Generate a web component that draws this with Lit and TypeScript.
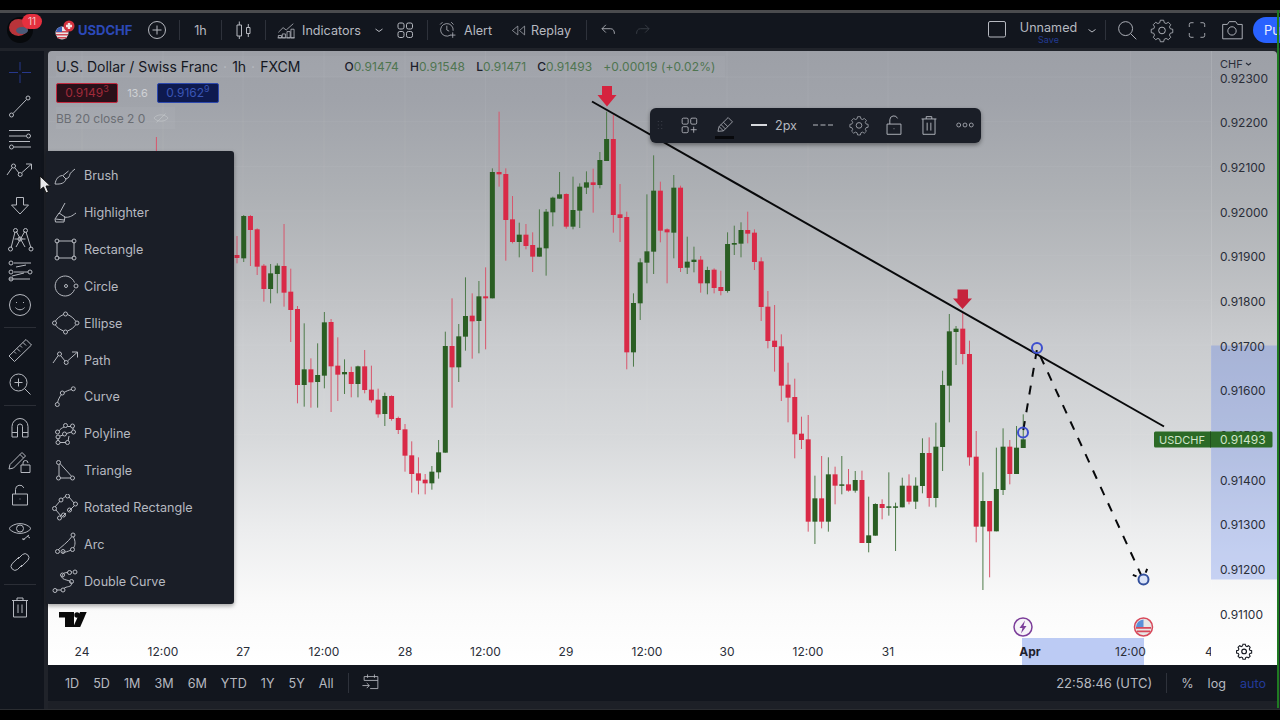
import { LitElement, html, svg, css } from 'lit';
import { customElement } from 'lit/decorators.js';

// candles, read off as [green?, high, bodyTop, bodyBottom, low]
type Raw = [number, number, number, number, number];
const G = 1, R = 0;
const setA: Raw[] = [
  [R,408,465,474,490],[G,345,348,475,486],[R,345,348,390,498],[R,385,388,500,525],[R,492,497,567,605],
  [G,492,520,567,610],[G,490,497,522,580],[R,372,498,578,620],[R,506,575,630,726],[R,618,627,855,910],
  [G,670,808,855,920],[R,775,808,847,923],[G,730,825,846,923],[G,636,667,827,865],[R,657,666,799,936],
  [R,712,797,824,903],[G,778,816,823,882],[R,800,816,852,892],[G,797,799,852,892],[R,750,799,870,880],
  [R,797,869,901,908],[R,866,899,943,953],[G,878,888,942,978],[R,886,888,957,962],[R,950,954,990,1002],
  [R,972,988,1067,1115],[R,1024,1066,1122,1178],[R,1072,1120,1142,1183],[R,1122,1139,1150,1183],[G,1098,1115,1150,1169],
  [G,1020,1057,1117,1136],[G,695,738,1058,1058],[R,595,738,802,923],[G,672,709,802,846],[G,532,648,710,752],
  [R,580,647,664,776],[G,543,589,663,760],[R,502,589,595,748],[G,205,216,595,595],[R,35,216,223,260],
  [R,205,222,360,482],[R,288,358,426,430],[G,368,404,426,472],[R,372,404,438,448],[R,397,435,470,516],
  [G,328,443,470,470],[G,327,335,445,527],[G,290,293,337,379],[G,216,283,296,296],[R,280,282,380,386],
  [G,230,330,380,388],[G,250,260,332,384],[G,214,247,263,282],[R,206,247,255,338],[G,156,180,255,265],
  [G,35,117,183,183],[R,45,117,345,398],[R,252,343,354,426],[R,335,351,757,808],[G,580,609,757,800],
];
const setB: Raw[] = [
  [G,355,367,490,540],[G,163,334,368,430],[G,46,152,335,402],[R,125,152,272,307],[R,265,268,277,430],
  [G,105,143,278,355],[R,137,143,384,396],[G,290,365,383,402],[G,320,359,366,397],[R,348,359,430,458],
  [G,380,390,430,463],[R,385,389,444,460],[R,392,441,453,466],[G,277,312,453,458],[G,257,309,314,345],
  [G,247,270,311,352],[R,215,270,281,310],[R,268,278,366,390],[R,352,364,501,543],
];
const setC: Raw[] = [
  [R,-27,20,123,145],[R,15,122,141,215],[R,103,139,257,303],[R,188,254,293,367],[R,236,291,403,475],
  [R,350,401,420,447],[R,345,418,665,695],[G,527,595,665,732],[R,468,595,665,685],[G,472,523,665,695],
  [R,500,523,557,613],[G,468,553,557,583],[R,507,553,572,575],[G,513,540,572,578],[R,512,540,729,729],
  [G,590,706,729,757],[G,610,612,707,707],[R,598,612,624,658],[G,517,619,623,647],[G,608,619,622,753],
  [G,533,557,622,622],[R,523,557,605,613],[G,532,557,605,627],[G,415,459,558,580],[R,412,459,594,620],
  [G,368,440,594,622],[G,212,255,441,513],[G,42,94,257,367],[G,78,86,96,195],[R,35,86,162,193],
  [R,122,162,472,497],[R,393,470,680,727],[G,517,603,680,870],[R,603,603,694,832],[G,443,567,694,694],
  [G,385,440,570,585],[R,420,440,522,553],[G,378,443,522,522],[G,343,418,444,444],
];
const toAbs = (set: Raw[], base: number) =>
  set.map(([g, h, t, b, l]) => ({ g, h: base + h / 3, t: base + t / 3, b: base + b / 3, l: base + l / 3 }));
const candles = [...toAbs(setA, 100), ...toAbs(setB, 140), ...toAbs(setC, 300)];

const prices: [string, number][] = [
  ['0.92300', 78], ['0.92200', 122.6], ['0.92100', 167.3], ['0.92000', 212], ['0.91900', 256.7],
  ['0.91800', 301.4], ['0.91700', 346], ['0.91600', 390.8], ['0.91500', 435.5], ['0.91400', 480.2],
  ['0.91300', 524.9], ['0.91200', 569.6], ['0.91100', 614.3],
];
const times: [string, number][] = [
  ['24', 82], ['12:00', 163], ['27', 243], ['12:00', 324], ['28', 405], ['12:00', 485.5],
  ['29', 566], ['12:00', 647], ['30', 727], ['12:00', 808], ['31', 888], ['12:00', 1130.5],
];

const dot = (x: number, y: number, r = 2) => svg`<circle cx=${x} cy=${y} r=${r}></circle>`;
const ic = (body: unknown, size = 28) =>
  html`<svg class="ic" width=${size} height=${size} viewBox="0 0 28 28">${body}</svg>`;

const pathIcon = svg`<path d="M1 17 L6.200 9.600M9 10 L13 15M15.700 14.800 L25 6.500M20 6 H25.500 V11.500"></path>${dot(7.5, 8, 2)}${dot(14.2, 16.5, 2)}`;
const gearPath = svg`<path d="M12 3.500h4l.7 3 2.200 1 2.700-1.500 2.800 2.800-1.500 2.700 1 2.200 3 .7v4l-3 .7-1 2.200 1.500 2.700-2.800 2.800-2.700-1.500-2.200 1-.7 3h-4l-.7-3-2.200-1-2.700 1.500-2.800-2.800 1.500-2.700-1-2.200-3-.7v-4l3-.7 1-2.200-1.500-2.700 2.800-2.800 2.700 1.500 2.200-1z" transform="translate(1.400 .3) scale(.9)"></path><circle cx="14" cy="14.500" r="3.600"></circle>`;
const trashPath = svg`<path d="M6 7.500h16M11 7.500V5h6v2.500M7.500 7.500V24h13V7.500M12 11.500v8.500M16 11.500v8.500"></path>`;
const lockPath = svg`<path d="M6.500 13h15v11h-15zM9.500 13V8.500a4.300 4.300 0 0 1 8.300-1.600"></path><path d="M13.600 18h.8"></path>`;

const menuItems: [string, unknown][] = [
  ['Brush', svg`<path d="M3 22c1-5 3-8 7.500-8.500l3.500 3.500c-1 4-5 5.500-11 5zM11 13.500 16.500 9M14 17c3-1 3.500-3 4-5 .3-1 2-2.500 5-5"></path>`],
  ['Highlighter', svg`<path d="M13 4 7 15M3 20l4-6 6 4-1 5H3.500zM3.500 20 12 21M12 18c5 1 8-1 12-4"></path>`],
  ['Rectangle', svg`<path d="M6 5h15M5 6v15M22 6v15M6 22h15"></path>${dot(5, 5)}${dot(22, 5)}${dot(5, 22)}${dot(22, 22)}`],
  ['Circle', svg`<path d="M22.500 10.500A10 10 0 1 0 22.500 17.500"></path>${dot(24, 14)}${dot(14, 14, 1.5)}`],
  ['Ellipse', svg`<path d="M3.500 12C5 9.500 8 7 11.500 5.500M15.500 5.500C19 7 22 9.500 23.500 12M23.500 16c-1.500 2.500-4.500 4.500-8 6M11.500 22c-3.500-1.500-6.500-3.500-8-6"></path>${dot(2.5, 14)}${dot(13.5, 5)}${dot(25, 14)}${dot(13.5, 23)}`],
  ['Path', pathIcon],
  ['Curve', svg`<path d="M5.500 19.500C6.500 16 7.500 14 9.500 11.500M12 9.500C14.500 8 17 7 19.500 6.500"></path>${dot(5.3, 21.5)}${dot(10.3, 10)}${dot(21.3, 5.8)}`],
  ['Polyline', svg`<path d="M7 11c1-2 3-3 5-4M15.500 6.500h3.500M21 8v2M19.500 12l-5 1.500M11 15l-3 1M6 18v3M8 22.500h6M16 21l1-5"></path>${dot(5.5, 12)}${dot(13.5, 5.5)}${dot(20.5, 6)}${dot(21.5, 12)}${dot(12.5, 14)}${dot(6, 17)}${dot(6, 22.5)}${dot(15.5, 22.5)}`],
  ['Triangle', svg`<path d="M7 7.500v11.500M8.500 21h10M19.300 19 8 6.500"></path>${dot(6.5, 5.5)}${dot(6.5, 21)}${dot(20.5, 21)}`],
  ['Rotated Rectangle', svg`<path d="M3 13l5-6M10 5l4-3M17 3l5 6M22 12l-5 5M14 19l-3 3M9 22 4 16"></path>${dot(2.5, 14.5)}${dot(9, 6)}${dot(15.5, 2)}${dot(23.5, 10)}${dot(17.5, 16)}${dot(11.5, 21)}${dot(7.5, 24)}`],
  ['Arc', svg`<path d="M6 20C9 17 16 12 19.500 7M21.500 7c2 4 2 8 0 11M19 20c-3 1.500-6 2.500-9 2M7 22"></path>${dot(21, 5)}${dot(5.5, 21.5)}${dot(20.5, 19.5)}${dot(11, 21.5)}`],
  ['Double Curve', svg`<path d="M4 23h5M12 21.500c2-2.500 8-1 7.500-5C19 12 9 14 10 9c.5-3 3-3.500 6-3.500M19 5h1"></path>${dot(3, 23.5)}${dot(11, 23)}${dot(19.5, 14.5)}${dot(10.5, 8)}${dot(17.5, 5.5)}${dot(23, 5)}`],
];

const railGroups: unknown[][] = [
  [
    svg`<path class="blue" d="M3 14.500h9M16 14.500h9M14 4v8.500M14 16.500V25"></path>`,
    svg`<path d="M7 22.500 20.500 8.500"></path>${dot(5.5, 24)}${dot(22, 7)}`,
    svg`<path d="M3 6.500h21M3 12h17M3 17.500h21M8 23h17"></path>${dot(22.5, 12)}${dot(5.5, 23)}`,
    pathIcon,
    svg`<path d="M10.500 6.500h7v7.500h5L14 23 5.500 14h5z"></path>`,
    svg`<path d="M5 23 9 7M10 6 19 22M19 6l-9 16M20 7l5 16M8.500 14h11"></path>${dot(9.5, 5.5)}${dot(19.5, 5.5)}${dot(14, 14)}${dot(4.5, 24)}${dot(25, 24)}`,
    svg`<path d="M8 5h17M8 14h14M3 21h21M10 9l10-2M6 18l12-3"></path>${dot(5, 5)}${dot(5, 14)}${dot(24, 14)}${dot(5, 21)}`,
    svg`<circle cx="14" cy="14" r="10.500"></circle><path d="M9.500 16.500c2 3 7 3 9 0"></path><path d="M10.500 11v1M17.500 11v1"></path>`,
  ],
  [
    svg`<path d="M3 20 20 3.500l5.500 5.500L8.500 25.500zM8 15.500l2 2M11 12.500l3 3M14 9.500l2 2M17 6.500l3 3"></path>`,
    svg`<circle cx="12.500" cy="12.500" r="8.500"></circle><path d="M12.500 8.500v8M8.500 12.500h8M18.500 18.500l6 6"></path>`,
  ],
  [
    svg`<path d="M6 23V12.500a8 8 0 0 1 16 0V23h-5.500V12.500a2.500 2.500 0 0 0-5 0V23zM6 18.500h5.500M16.500 18.500H22"></path>`,
    svg`<path d="M3 21l1-4.500L16 4.500l3.500 3.500L7.500 20zM14 6.500l3.500 3.500M15 17h9v7.500h-9zM17 17v-2a2.500 2.500 0 0 1 5 0"></path>`,
    lockPath,
    svg`<path d="M3 13.500C8 7 20 7 25 13.500 20 20 8 20 3 13.500z"></path><circle cx="14" cy="13.500" r="3.500"></circle><path d="M17 25l6-5M16 24h3M21 21l3 2"></path>`,
    svg`<path d="M12 11 16.500 6.500a4 4 0 0 1 5.600 5.600L15 19M16 17 11.500 21.500a4 4 0 0 1-5.600-5.600L13 9"></path>`,
  ],
  [trashPath],
];

@customElement('app-root')
export class AppRoot extends LitElement {
  static styles = css`
    :host {
      display: block;
      width: 1280px;
      height: 720px;
      position: relative;
      overflow: hidden;
      background: #000;
      font-family: Inter, "Liberation Sans", sans-serif;
      color: #b6b9c0;
      font-size: 12.600px;
    }
    .ic { fill: none; stroke: currentColor; stroke-width: 1; display: block; flex: none; }
    .blue { stroke: #27388c; }
    .frame { display: flex; flex-direction: column; height: 720px; }
    .lid { height: 10px; flex: none; }
    .rule { height: 2.500px; flex: none; background: #4a4b4e; }
    .topbar {
      height: 35px;
      flex: none;
      background: #12161e;
      display: grid;
      grid-template-columns: 44px 100px 26px 9px 1px 41px 1px 43px 1px 101px 23px 30px 7px 1px 77px 75px 6px 1px 42px 28px 1fr 34px 69px 18px 4px 1px 42px 28px 42px 28px 7px 27px;
      align-items: center;
      justify-items: center;
      overflow: hidden;
    }
    .sep { width: 1px; height: 20px; background: #2e323b; }
    .cell { position: relative; display: flex; align-items: center; justify-content: center; }
    .avatar { width: 26px; height: 26px; border-radius: 50%; background: #07090c; position: relative; margin-left: -4px; }
    .blob { position: absolute; left: 2px; top: 2px; width: 19px; height: 17px; border-radius: 50%; background: #b8343a; }
    .blob2 { position: absolute; left: 9px; top: 10px; width: 12px; height: 7px; border-radius: 50%; background: #4b5a78; }
    .count {
      position: absolute;
      left: 15px;
      top: -3px;
      width: 20px;
      height: 15px;
      border-radius: 8px;
      background: #e5303f;
      color: #f3c5c8;
      font-size: 10px;
      line-height: 15px;
      text-align: center;
    }
    .symbol { justify-self: start; display: flex; align-items: center; gap: 0; }
    .symbol svg { margin-left: 9px; }
    .sym { color: #2c49b8; font-weight: 700; font-size: 13px; margin-left: 1px; }
    .tool { justify-self: start; display: flex; align-items: center; white-space: nowrap; }
    .tool.ind { margin-left: 10px; gap: 4px; }
    .tool.alert { margin-left: 9px; gap: 5px; }
    .tool.replay { margin-left: 4px; gap: 3px; }
    .dim { color: #3c4049; }
    .name { display: flex; flex-direction: column; align-items: center; line-height: 13px; margin-top: 5px; }
    .save { color: #223a92; font-size: 9px; line-height: 11px; }
    .publish {
      justify-self: start;
      width: 60px;
      height: 26px;
      border-radius: 13px;
      background: #2962ff;
      color: #e8edff;
      font-size: 13px;
      line-height: 26px;
      padding-left: 11px;
      box-sizing: border-box;
    }
    .gapbar { height: 3.500px; flex: none; background: #20232a; }
    .main { flex: 1; display: flex; min-height: 0; background: #20232a; }
    .rail {
      width: 44px;
      flex: none;
      background: #11151d;
      padding: 4px 4px 0 0;
      box-sizing: border-box;
      margin-right: 4px;
    }
    .rail-group { display: flex; flex-direction: column; }
    .rail-item { height: 33.400px; display: flex; align-items: center; justify-content: center; }
    .rail-sep { height: 11.400px; display: flex; align-items: center; justify-content: center; }
    .rail-sep i { display: block; width: 32px; height: 1px; background: #2b2e36; }
    .work { flex: 1; display: flex; flex-direction: column; min-width: 0; margin-right: 3px; }
    .chart {
      height: 613.500px;
      flex: none;
      position: relative;
      border-radius: 4px 4px 0 0;
      overflow: hidden;
      background: linear-gradient(180deg, #9da0a7 0%, #a0a3aa 8%, #aeb1b5 24%, #c0c2c5 40%, #c9cbce 47%, #d7d9db 63%, #ecedee 78%, #fafafa 90%, #fff 100%);
    }
    .canvas { position: absolute; inset: 0; display: block; }
    .ax { font: 12px Inter, "Liberation Sans", sans-serif; fill: #2a2e39; }
    .ax.bold { font-weight: 700; fill: #1e222d; }
    .ax.onlabel { fill: #cfe4c8; }
    .ax.small { font-size: 11px; }
    .ax.unit { font-size: 11px; }
    .wick-g { stroke: #4e7a49; }
    .wick-r { stroke: #d8566c; }
    .legend { position: absolute; left: 8px; top: 5px; display: flex; flex-direction: column; gap: 0; }
    .title-row {
      display: flex;
      align-items: center;
      height: 21px;
      width: 669px;
      background: rgba(255, 255, 255, .04);
      color: #14171f;
      font-size: 14px;
      white-space: nowrap;
    }
    .title-row .mid { color: #b8bbc0; margin: 0 5px; }
    .ohlc { margin-left: 44px; font-size: 12px; color: #4f7550; letter-spacing: .1px; }
    .ohlc b { color: #1c202b; font-weight: 500; }
    .ohlc span { margin-right: 11px; }
    .ohlc span:last-child { margin-right: 0; }
    .badges { display: flex; align-items: center; margin-top: 6px; height: 20px; }
    .pb {
      width: 62px;
      height: 20px;
      box-sizing: border-box;
      border-radius: 2px;
      border: 1px solid;
      font-size: 12px;
      line-height: 18px;
      text-align: center;
    }
    .pb sup { font-size: 9px; line-height: 0; }
    .pb.sell { background: #2a1019; border-color: #c22a40; color: #a02a3a; }
    .pb.buy { background: #0e1a4f; border-color: #2c48ae; color: #3a55b6; }
    .spread { width: 39px; text-align: center; font-size: 11px; color: #cfd1d5; }
    .bb {
      display: flex;
      align-items: center;
      height: 22px;
      width: 119px;
      margin-top: 4px;
      background: rgba(255, 255, 255, .04);
      color: #6a6d73;
      font-size: 12px;
      gap: 7px;
      white-space: nowrap;
    }
    .bb .ic { color: #c4c6ca; }
    .bottom {
      height: 36px;
      flex: none;
      background: #12161e;
      display: flex;
      align-items: center;
      padding: 1px 11px 0 17px;
      box-sizing: border-box;
      gap: 14px;
    }
    .bottom .sep { margin-left: 0; }
    .bottom .cal { margin-left: -4px; }
    .spacer { flex: 1; }
    .utc { font-size: 13px; }
    .auto { color: #223a9a; }
    .strip { height: 8px; flex: none; background: #1d2027; border-radius: 4px 4px 0 0; }
    .floor { height: 11.500px; flex: none; background: #000; border-top: 1px solid #2a2c30; box-sizing: border-box; margin: 0 -3px 0 -48px; }
    .edge { position: absolute; right: 1px; top: 10px; width: 2px; height: 698px; background: #1f7a22; }
    .flyout {
      position: absolute;
      left: 46px;
      top: 151px;
      width: 188px;
      height: 453px;
      background: #1a1e27;
      border-radius: 0 3px 3px 3px;
      box-shadow: 0 2px 4px rgba(0, 0, 0, .35);
      box-sizing: border-box;
      padding: 6.500px 0;
    }
    .fly-item { height: 36.850px; display: flex; align-items: center; padding-left: 6px; gap: 4px; color: #b6b9c0; }
    .floating {
      position: absolute;
      left: 650px;
      top: 108px;
      width: 331px;
      height: 35px;
      box-sizing: border-box;
      padding-bottom: 1px;
      background: #1a1e27;
      border-radius: 6px;
      box-shadow: 0 2px 4px rgba(0, 0, 0, .4);
      display: grid;
      grid-template-columns: 20px 38px 34px 34px 20px 10px 34px 38px 32px 38px 1fr;
      align-items: center;
      justify-items: center;
    }
    .pencil { position: relative; display: flex; }
    .pencil::after { content: ""; position: absolute; left: 1px; right: 2px; bottom: -3px; height: 3px; background: #08090c; }
    .width-text { white-space: nowrap; }
    .cursor { position: absolute; left: 38px; top: 175px; }
  `;

  private chartSvg() {
    const x = (i: number) => 237 + i * 6.72;
    const gridX = times.map((t) => t[1]);
    return svg`
      <svg class="canvas" width="1229" height="613.500" viewBox="48 51 1229 613.500">
        <defs><clipPath id="tick-clip"><rect x="1200" y="640" width="11" height="20"></rect></clipPath></defs>
        ${gridX.map((g) => svg`<line x1=${g} x2=${g} y1="51" y2="638" stroke="#fff" stroke-opacity=".05"></line>`)}
        ${prices.map((p) => svg`<line x1="48" x2="1211" y1=${p[1] - 1} y2=${p[1] - 1} stroke="#fff" stroke-opacity=".05"></line>`)}
        <line x1="1211.500" x2="1211.500" y1="51" y2="664" stroke="#fff" stroke-opacity=".12"></line>
        <rect x="1211" y="345.500" width="66" height="234" fill="#4a74ee" fill-opacity=".27"></rect>
        <rect x="1022" y="638" width="122" height="27" fill="#bccbf4"></rect>

        <line x1="156.400" x2="156.400" y1="137" y2="160" class="wick-r"></line>
        ${candles.map((c, i) => svg`
          <line x1=${x(i)} x2=${x(i)} y1=${c.h} y2=${c.l} class=${c.g ? 'wick-g' : 'wick-r'}></line>
          <rect x=${x(i) - 2.5} y=${c.t} width="5" height=${Math.max(c.b - c.t, 1.5)} fill=${c.g ? '#2a5e23' : '#d92a47'}></rect>
        `)}

        <path d="M602 86h10v9h4.500L607 106.500 597.500 95h4.500z" fill="#d5233e"></path>
        <path d="M957.500 289.500h10.500v9h4L962.500 309 953 298.500h4.500z" fill="#c6233c"></path>
        <line x1="592" y1="101.500" x2="1164" y2="426.500" stroke="#08090b" stroke-width="2"></line>
        <path d="M1023 432 1037 349 1143 579" fill="none" stroke="#08090b" stroke-width="2" stroke-dasharray="9 9" stroke-dashoffset="-2"></path>
        <path d="M1143 579 1132 574.500M1143 579 1147.500 568" fill="none" stroke="#08090b" stroke-width="2" stroke-dasharray="4 3"></path>
        <circle cx="1037" cy="348" r="5" fill="none" stroke="#3d4fce" stroke-width="2"></circle>
        <circle cx="1023" cy="432.500" r="5" fill="none" stroke="#3d4fce" stroke-width="2"></circle>
        <circle cx="1143.500" cy="579.500" r="5" fill="#dbe4f8" stroke="#33509c" stroke-width="2"></circle>

        <g fill="#0a0a0a">
          <path d="M59 612h15v15h-9v-9.500h-6z"></path>
          <circle cx="77" cy="615" r="2.700"></circle>
          <path d="M80 612h6.700l-6.500 15h-7z"></path>
        </g>

        <circle cx="1023" cy="627" r="9" fill="#f6f3f8" stroke="#7c3e9a" stroke-width="1.500"></circle>
        <path d="M1025 620.500 1019.500 628h3l-1.500 5.500 5.500-7.500h-3z" fill="#7c3e9a"></path>
        <circle cx="1143.500" cy="627" r="9" fill="#e6e6e6" stroke="#d8485a" stroke-width="1.500"></circle>
        <path d="M1136 627h15v1.800h-15zM1137 630.500h13v1.800h-13z" fill="#d8485a"></path>
        <path d="M1136 627a8 8 0 0 1 7.500-7.500v7.500z" fill="#5a8fd8"></path>

        ${prices.map((p) => svg`<text class="ax" x="1220" y=${p[1] + 4.5}>${p[0]}</text>`)}
        ${times.map((t) => svg`<text class="ax" x=${t[1]} y="655.500" text-anchor="middle">${t[0]}</text>`)}
        <text class="ax bold" x="1030" y="655.500" text-anchor="middle">Apr</text>
        <text class="ax" x="1205" y="655.500" clip-path="url(#tick-clip)">4</text>

        <rect x="1154" y="431.500" width="118.500" height="16" rx="1.500" fill="#2c6a26"></rect>
        <line x1="1210.500" x2="1210.500" y1="431.500" y2="447.500" stroke="#1f4f1b"></line>
        <text class="ax onlabel small" x="1159" y="443.500">USDCHF</text>
        <text class="ax onlabel" x="1220" y="444">0.91493</text>

        <text class="ax unit" x="1220" y="68">CHF</text>
        <path d="M1246 63l2.500 2 2.500-2" fill="none" stroke="#2a2e39" stroke-width="1.200"></path>
        <g transform="translate(1235 642) scale(.65)" fill="none" stroke="#14171f" stroke-width="1.800">${gearPath}</g>
      </svg>
    `;
  }

  render() {
    return html`
      <div class="frame">
        <div class="lid"></div>
        <div class="rule"></div>
        <div class="topbar">
          <div class="cell">
            <div class="avatar"><div class="blob"></div><div class="blob2"></div><div class="count">11</div></div>
          </div>
          <div class="symbol">
            <svg width="24" height="24" viewBox="0 0 24 24">
              <circle cx="9" cy="15" r="6.500" fill="#e8e6e8"></circle>
              <path d="M3 13h12v1.600H3zM3 16h12v1.600H3zM4.500 19h9v1.400h-9z" fill="#cf4a56"></path>
              <path d="M3 14a6.500 6.500 0 0 1 6-5.500V14z" fill="#3d5fb5"></path>
              <circle cx="16" cy="8" r="5.500" fill="#d4333f"></circle>
              <path d="M14.800 5h2.400v1.800H19v2.400h-1.800V11h-2.400V9.200H13V6.800h1.800z" fill="#f2e6e6"></path>
            </svg>
            <span class="sym">USDCHF</span>
          </div>
          ${ic(svg`<circle cx="14" cy="14" r="8.500"></circle><path d="M14 9.500v9M9.500 14h9"></path>`, 28)}
          <i></i>
          <div class="sep"></div>
          <div>1h</div>
          <div class="sep"></div>
          ${ic(svg`<path d="M7 9h4.500v11H7zM9.300 5.500V9M9.300 20v3M16.500 11.500H20v6h-3.500zM18.300 8v3.500M18.300 17.500V21"></path>`, 28)}
          <div class="sep"></div>
          <div class="tool ind">
            ${ic(svg`<path d="M3 17l6-6 4 3 9-8M3 24v-3h4v3zM8 24v-5h4v5zM14 24v-8h4v8zM19 24V13h4v11zM2 24h22"></path>`, 22)}
            <span>Indicators</span>
          </div>
          ${ic(svg`<path d="M10.500 13l3.500 2.500 3.500-2.500"></path>`, 28)}
          ${ic(svg`<rect x="7" y="7" width="6" height="6" rx="1.800"></rect><rect x="15.500" y="7" width="6" height="6" rx="1.800"></rect><rect x="7" y="15.500" width="6" height="6" rx="1.800"></rect><rect x="15.500" y="15.500" width="6" height="6" rx="1.800"></rect>`, 28)}
          <i></i>
          <div class="sep"></div>
          <div class="tool alert">
            ${ic(svg`<path d="M17 20.500A8 8 0 1 1 20.500 15M12.500 8.500v5.500l3 1.500M4 7l3-3M18 4l3 3M20 17v7M16.500 20.500h7"></path>`, 22)}
            <span>Alert</span>
          </div>
          <div class="tool replay">
            ${ic(svg`<path d="M13 7.500v13L5 14zM23 7.500v13L15.500 14z"></path>`, 19)}
            <span>Replay</span>
          </div>
          <i></i>
          <div class="sep"></div>
          ${ic(svg`<path d="M7 12.500 11.500 8M7 12.500l4.500 4.500M7 12.500h10c3.500 0 4.500 3 4.500 6"></path>`, 24)}
          <div class="dim">${ic(svg`<path d="M21 12.500 16.500 8M21 12.500 16.500 17M21 12.500H11c-3.500 0-4.500 3-4.500 6"></path>`, 24)}</div>
          <i></i>
          ${ic(svg`<rect x="5.500" y="5.500" width="17" height="15.500" rx="1.500"></rect>`, 28)}
          <div class="name"><span>Unnamed</span><span class="save">Save</span></div>
          ${ic(svg`<path d="M10.500 13.500l3.500 2.500 3.500-2.500"></path>`, 28)}
          <i></i>
          <div class="sep"></div>
          ${ic(svg`<circle cx="12.500" cy="12.500" r="7.500"></circle><path d="M18 18l6 6"></path>`, 26)}
          ${ic(gearPath, 26)}
          ${ic(svg`<path d="M10 5.500H7a2 2 0 0 0-2 2v3M18 5.500h3a2 2 0 0 1 2 2v3M10 22.500H7a2 2 0 0 1-2-2v-3M18 22.500h3a2 2 0 0 0 2-2v-3"></path>`, 24)}
          ${ic(svg`<path d="M4 8h5l2-3h7l2 3h5v15.500H4z"></path><circle cx="14" cy="15" r="4.500"></circle>`, 26)}
          <i></i>
          <div class="publish">Publish</div>
        </div>
        <div class="gapbar"></div>
        <div class="main">
          <div class="rail">
            ${railGroups.map((group, gi) => html`
              ${gi ? html`<div class="rail-sep"><i></i></div>` : ''}
              <div class="rail-group">
                ${group.map((g) => html`<div class="rail-item">${ic(g)}</div>`)}
              </div>
            `)}
          </div>
          <div class="work">
            <div class="chart">
              ${this.chartSvg()}
              <div class="legend">
                <div class="title-row">
                  <span>U.S. Dollar / Swiss Franc</span><span class="mid">·</span><span>1h</span><span class="mid">·</span><span>FXCM</span>
                  <div class="ohlc"><b>O</b><span>0.91474</span><b>H</b><span>0.91548</span><b>L</b><span>0.91471</span><b>C</b><span>0.91493</span><span>+0.00019 (+0.02%)</span></div>
                </div>
                <div class="badges">
                  <div class="pb sell">0.9149<sup>3</sup></div>
                  <div class="spread">13.6</div>
                  <div class="pb buy">0.9162<sup>9</sup></div>
                </div>
                <div class="bb">
                  <span>BB 20 close 2 0</span>
                  ${ic(svg`<path d="M3 14C8 7.500 20 7.500 25 14 20 20.500 8 20.500 3 14zM7 21 21 7"></path>`, 18)}
                </div>
              </div>
            </div>
            <div class="bottom">
              <span>1D</span><span>5D</span><span>1M</span><span>3M</span><span>6M</span><span>YTD</span><span>1Y</span><span>5Y</span><span>All</span>
              <div class="sep"></div>
              <div class="cal">${ic(svg`<path d="M6 11V6.500h16v14H13M6 11h16M10 4v4M18 4v4M4 17h8M9 14l3 3-3 3"></path>`, 24)}</div>
              <div class="spacer"></div>
              <span class="utc">22:58:46 (UTC)</span>
              <div class="sep"></div>
              <span>%</span><span>log</span><span class="auto">auto</span>
            </div>
            <div class="strip"></div>
            <div class="floor"></div>
          </div>
        </div>
      </div>
      <div class="edge"></div>

      <div class="flyout">
        ${menuItems.map(([label, icon]) => html`<div class="fly-item">${ic(icon)}<span>${label}</span></div>`)}
      </div>

      <div class="floating">
        ${ic(svg`<path d="M11 9h1M16 9h1M11 14h1M16 14h1M11 19h1M16 19h1" stroke="#4a4e58" stroke-width="1.500"></path>`, 20)}
        ${ic(svg`<rect x="6" y="6" width="7" height="7" rx="1.500"></rect><rect x="16" y="6" width="7" height="7" rx="1.500"></rect><rect x="6" y="16" width="7" height="7" rx="1.500"></rect><path d="M19.500 16v7M16 19.500h7"></path>`, 24)}
        <div class="pencil">${ic(svg`<path d="M5 22l1.500-6L18 4.500 23.500 10 12 21.500zM6.500 16l5.500 5.500M9 13.500l5.500 5.500M12 10.500l5.500 5.500"></path>`, 22)}</div>
        <svg width="17" height="4" viewBox="0 0 17 4"><rect y="1" width="16" height="2" fill="#d6d8dc"></rect></svg>
        <span class="width-text">2px</span>
        <i></i>
        <svg width="22" height="4" viewBox="0 0 22 4"><path d="M1 2h5M8.500 2h5M16 2h5" stroke="#b6b9c0"></path></svg>
        ${ic(gearPath, 22)}
        ${ic(lockPath, 26)}
        ${ic(trashPath, 26)}
        ${ic(svg`<circle cx="6" cy="14" r="2.500"></circle><circle cx="14" cy="14" r="2.500"></circle><circle cx="22" cy="14" r="2.500"></circle>`, 22)}
      </div>

      <svg class="cursor" width="14" height="20" viewBox="0 0 14 20">
        <path d="M2 1v14l3.500-3 2.500 6 2.500-1-2.500-6h4.500z" fill="#e8e8ea" stroke="#111" stroke-width="1"></path>
      </svg>
    `;
  }
}
